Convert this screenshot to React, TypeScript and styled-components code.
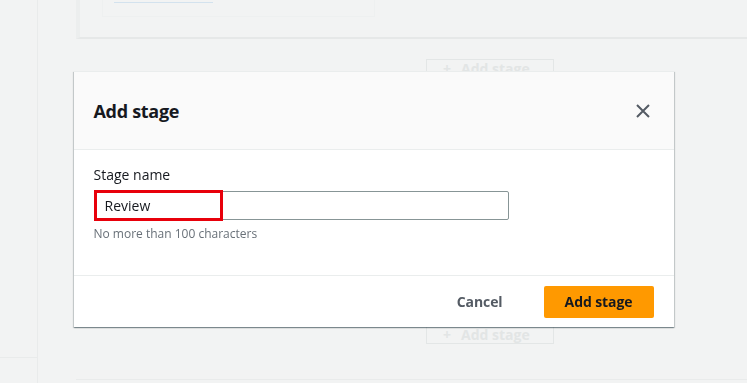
import styled, { createGlobalStyle } from "styled-components";

const GlobalStyle = createGlobalStyle`
  html, body {
    margin: 0;
    padding: 0;
    background: #f2f3f3;
    font-family: "Open Sans", "Noto Sans", Arial, sans-serif;
  }
`;

const Page = styled.div`
  display: flex;
  width: 747px;
  height: 383px;
  overflow: hidden;
`;

const Sidebar = styled.div`
  width: 37px;
  flex-shrink: 0;
  border-right: 1px solid #e9ebeb;
`;

const SidebarBlock = styled.div`
  height: 357px;
  border-bottom: 1px solid #e9ebeb;
`;

const Content = styled.div`
  flex: 1;
  padding-left: 38px;
  display: flex;
  flex-direction: column;
  overflow: hidden;

  & > * {
    flex-shrink: 0;
  }
`;

const TopPanel = styled.div`
  height: 37px;
  border-left: 4px solid #eceeee;
  border-bottom: 2px solid #e6e8e8;
  padding-left: 22px;
`;

const InnerBox = styled.div`
  width: 260px;
  height: 16px;
  border: 1px solid #eef0f0;
  border-top: none;
  padding-left: 11px;
`;

const FadedLink = styled.div`
  width: 99px;
  height: 2px;
  border-bottom: 1px solid #d3e2ee;
`;

const StageColumn = styled.div`
  margin-left: 350px;
  margin-top: 20px;
  display: flex;
  flex-direction: column;
  gap: 247px;
`;

const GhostButton = styled.div`
  width: 128px;
  height: 19px;
  border: 1px solid #e3e6e6;
  font-size: 14px;
  font-weight: 700;
  color: #e2e5e5;
  display: flex;
  align-items: center;
  gap: 10px;
  padding-left: 16px;
  box-sizing: border-box;
  overflow: hidden;
`;

const BottomPanel = styled.div`
  margin-top: 35px;
  height: 4px;
  border-top: 1px solid #e9ebeb;
`;

const Overlay = styled.div`
  position: fixed;
  inset: 0;
  display: flex;
  justify-content: center;
  align-items: flex-start;
  padding-top: 71px;
`;

const Modal = styled.div`
  width: 600px;
  background: #ffffff;
  box-shadow: 0 1px 1px 0 rgba(0, 28, 36, 0.3), 1px 1px 1px 0 rgba(0, 28, 36, 0.15),
    -1px 1px 1px 0 rgba(0, 28, 36, 0.15);
  border-top: 1px solid #eaeded;
`;

const ModalHeader = styled.div`
  height: 77px;
  background: #fafafa;
  border-bottom: 1px solid #eaeded;
  display: flex;
  align-items: center;
  justify-content: space-between;
  padding: 0 19px 0 20px;
`;

const Title = styled.h2`
  margin: 0;
  font-size: 18px;
  font-weight: 700;
  letter-spacing: -0.3px;
  color: #16191f;
`;

const CloseButton = styled.button`
  border: none;
  background: none;
  padding: 4px;
  display: flex;
  color: #545b64;
  cursor: pointer;
`;

const ModalBody = styled.div`
  padding: 14px 20px 33px;
  border-bottom: 1px solid #eaeded;
`;

const Label = styled.div`
  font-size: 14px;
  line-height: 22px;
  color: #16191f;
  margin-bottom: 5px;
`;

const InputWrap = styled.div`
  position: relative;
  width: 415px;
`;

const Input = styled.input`
  display: block;
  width: 100%;
  height: 29px;
  box-sizing: border-box;
  border: 1px solid #879596;
  border-radius: 2px;
  padding: 0 10px;
  font-family: inherit;
  font-size: 14px;
  color: #16191f;
  outline: none;
`;

const Highlight = styled.div`
  position: absolute;
  left: 0;
  top: -1px;
  width: 129px;
  height: 31px;
  box-sizing: border-box;
  border: 3px solid #e8000b;
  pointer-events: none;
`;

const Hint = styled.div`
  margin-top: 6px;
  font-size: 12px;
  line-height: 16px;
  color: #687078;
`;

const ModalFooter = styled.div`
  height: 51px;
  display: flex;
  align-items: center;
  justify-content: flex-end;
  padding-right: 20px;
  gap: 21px;
`;

const Button = styled.button<{ $primary?: boolean }>`
  height: 32px;
  padding: 0 ${(p) => (p.$primary ? "0" : "20px")};
  width: ${(p) => (p.$primary ? "110px" : "auto")};
  border: none;
  border-radius: 2px;
  font-family: inherit;
  font-size: 14px;
  font-weight: 700;
  letter-spacing: -0.1px;
  background: ${(p) => (p.$primary ? "#ff9900" : "transparent")};
  color: ${(p) => (p.$primary ? "#16191f" : "#545b64")};
  cursor: pointer;
`;

export default function App() {
  return (
    <>
      <GlobalStyle />
      <Page>
        <Sidebar>
          <SidebarBlock />
        </Sidebar>
        <Content>
          <TopPanel>
            <InnerBox>
              <FadedLink />
            </InnerBox>
          </TopPanel>
          <StageColumn>
            <GhostButton>
              <span>+</span>
              <span>Add stage</span>
            </GhostButton>
            <GhostButton>
              <span>+</span>
              <span>Add stage</span>
            </GhostButton>
          </StageColumn>
          <BottomPanel />
        </Content>
      </Page>
      <Overlay>
        <Modal>
          <ModalHeader>
            <Title>Add stage</Title>
            <CloseButton aria-label="Close">
              <svg width="16" height="16" viewBox="0 0 16 16">
                <path d="M2 2 L14 14 M14 2 L2 14" stroke="currentColor" strokeWidth="2" fill="none" />
              </svg>
            </CloseButton>
          </ModalHeader>
          <ModalBody>
            <Label>Stage name</Label>
            <InputWrap>
              <Input defaultValue="Review" />
              <Highlight />
            </InputWrap>
            <Hint>No more than 100 characters</Hint>
          </ModalBody>
          <ModalFooter>
            <Button>Cancel</Button>
            <Button $primary>Add stage</Button>
          </ModalFooter>
        </Modal>
      </Overlay>
    </>
  );
}
